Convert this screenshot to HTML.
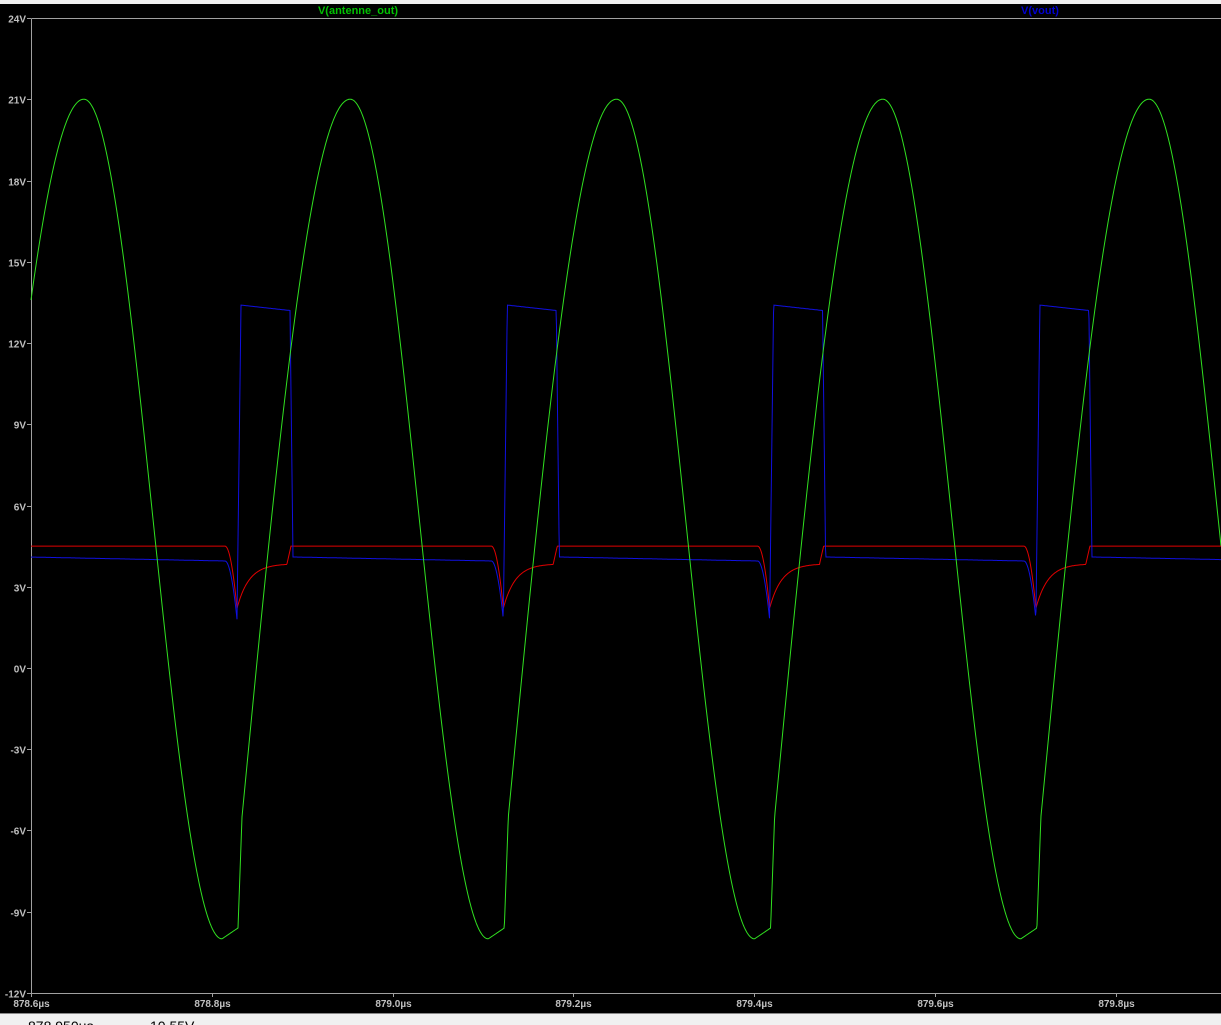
<!DOCTYPE html>
<html><head><meta charset="utf-8"><style>
html,body{margin:0;padding:0;background:#000;width:1221px;height:1024px;overflow:hidden;font-family:"Liberation Sans",Arial,sans-serif}
#top{position:absolute;left:0;top:0;width:1221px;height:4px;background:#f0f0f0;z-index:2}
#bot{position:absolute;left:0;top:1013px;width:1221px;height:11px;background:#f0f0f0;border-top:1px solid #888;overflow:hidden;z-index:2}
#bot span{position:absolute;top:4px;font-size:14px;color:#000}
svg{position:absolute;left:0;top:0}
</style></head><body>
<div id="top"></div>
<svg id="s" width="1221" height="1024" xmlns="http://www.w3.org/2000/svg">
<g font-family="Liberation Sans, Arial, sans-serif" font-weight="bold" font-size="10" fill="#c0c0c0" id="lab"></g>
<path id="ax" stroke="#a0a0a0" stroke-width="1" fill="none"/>
<text x="358" y="14" font-family="Liberation Sans, Arial, sans-serif" font-weight="bold" font-size="11" fill="#00c000" text-anchor="middle">V(antenne_out)</text>
<text x="1040" y="14" font-family="Liberation Sans, Arial, sans-serif" font-weight="bold" font-size="11" fill="#0000d0" text-anchor="middle">V(vout)</text>
<path id="red" stroke="#e00000" stroke-width="1" fill="none"/>
<path id="blue" stroke="#1010e0" stroke-width="1" fill="none"/>
<path id="green" stroke="#30e020" stroke-width="1" fill="none"/>
</svg>
<div id="bot"><span style="left:28px">878.950µs</span><span style="left:150px">10.55V</span></div>
<script>
var NS="http://www.w3.org/2000/svg";
function Y(v){return 668-v*27.083;}
var lab=document.getElementById('lab'),ax=document.getElementById('ax');
var a="M31.5,18.5 V993.5 H1221 M31.5,18.5 H1221";
for(var v=24;v>=-12;v-=3){var y=Math.round(Y(v))+0.5;a+=" M27,"+y+" H31";
var t=document.createElementNS(NS,'text');t.setAttribute('x',26);t.setAttribute('y',(y+4).toFixed(1));t.setAttribute('text-anchor','end');t.textContent=v+"V";lab.appendChild(t);}
var xl=["878.6µs","878.8µs","879.0µs","879.2µs","879.4µs","879.6µs","879.8µs"];
for(var i=0;i<7;i++){var x=Math.round(31+i*180.8)+0.5;a+=" M"+x+",993 V997";
var t=document.createElementNS(NS,'text');t.setAttribute('x',x);t.setAttribute('y',1007);t.setAttribute('text-anchor','middle');t.textContent=xl[i];lab.appendChild(t);}
ax.setAttribute('d',a);
var T=266.3;
function green(x){var k=Math.floor((x-84)/T);var P=84+k*T;var d=x-P;
if(d<=138)return 5.5+15.5*Math.cos(Math.PI*d/138);
if(d<=154)return -10+0.4*(d-138)/16;
if(d<=158)return -9.6+4.1*(d-154)/4;
var t=(d-158)/108;return -5.5+26.5*Math.sin(Math.PI/2*t);}
function blue(x){var k=Math.floor((x-84)/T);var P=84+k*T;var d=x-P;
if(d<0){d+=T;}
if(d<141||d>=209){var dd=d>=209?d-209:d+T-209;return 4.1-0.15*Math.min(dd/200,1);}
if(d<153)return 3.95-2.15*Math.pow((d-141)/12,2);
if(d<157)return 1.8+11.6*(d-153)/4;
if(d<206)return 13.4-0.2*(d-157)/49;
return 13.2-9.1*(d-206)/3;}
function red(x){var k=Math.floor((x-84)/T);var P=84+k*T;var d=x-P;if(d<0)d+=T;
if(d<141||d>=207)return 4.5;
if(d<153)return 4.5-2.3*Math.pow((d-141)/12,2);
if(d<203)return 3.85-1.65*Math.exp(-(d-153)/12);
return 3.85+0.65*(d-203)/4;}
function mk(f,id,step){var s="";for(var x=31;x<=1221;x+=step){s+=(s?"L":"M")+x.toFixed(1)+","+Y(f(x)).toFixed(1);}document.getElementById(id).setAttribute('d',s);}
mk(green,'green',0.5);mk(blue,'blue',0.5);mk(red,'red',0.5);
</script>
</body></html>
